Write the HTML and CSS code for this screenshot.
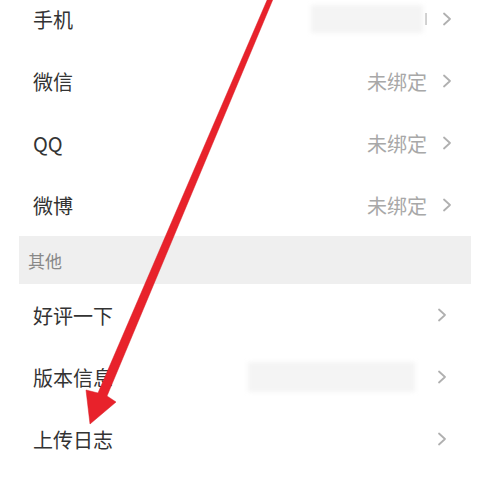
FILE: index.html
```html
<!DOCTYPE html>
<html lang="zh-CN">
<head>
<meta charset="utf-8">
<title>设置</title>
<link rel="stylesheet" href="styles.css">
</head>
<body>
<div class="page">
  <div class="list">
    <div class="group group-account">
      <div class="row">
        <span class="label">手机</span>
        <span class="value"><span class="masked masked-phone"></span><span class="tick"></span></span>
        <svg class="chev" viewBox="0 0 10 14" width="10" height="14"><polyline points="2,1.5 8,7 2,12.5"/></svg>
      </div>
      <div class="row">
        <span class="label">微信</span>
        <span class="value">未绑定</span>
        <svg class="chev" viewBox="0 0 10 14" width="10" height="14"><polyline points="2,1.5 8,7 2,12.5"/></svg>
      </div>
      <div class="row">
        <span class="label">QQ</span>
        <span class="value">未绑定</span>
        <svg class="chev" viewBox="0 0 10 14" width="10" height="14"><polyline points="2,1.5 8,7 2,12.5"/></svg>
      </div>
      <div class="row">
        <span class="label">微博</span>
        <span class="value">未绑定</span>
        <svg class="chev" viewBox="0 0 10 14" width="10" height="14"><polyline points="2,1.5 8,7 2,12.5"/></svg>
      </div>
    </div>
    <div class="section-title">其他</div>
    <div class="group group-other">
      <div class="row">
        <span class="label">好评一下</span>
        <span class="value"></span>
        <svg class="chev" viewBox="0 0 10 14" width="10" height="14"><polyline points="2,1.5 8,7 2,12.5"/></svg>
      </div>
      <div class="row">
        <span class="label">版本信息</span>
        <span class="value"><span class="masked masked-version"></span></span>
        <svg class="chev" viewBox="0 0 10 14" width="10" height="14"><polyline points="2,1.5 8,7 2,12.5"/></svg>
      </div>
      <div class="row">
        <span class="label">上传日志</span>
        <span class="value"></span>
        <svg class="chev" viewBox="0 0 10 14" width="10" height="14"><polyline points="2,1.5 8,7 2,12.5"/></svg>
      </div>
    </div>
  </div>

  <!-- annotation arrow pointing at the log upload entry -->
  <svg class="pointer" viewBox="0 0 487 481" width="487" height="481">
    <polygon points="268,-2 273.5,-2 107,396 116,402 90,424 86,390 98,393"/>
  </svg>
</div>
</body>
</html>
```

FILE: styles.css
```css
html, body {
  margin: 0;
  padding: 0;
  background: #ffffff;
}

.page {
  position: relative;
  width: 487px;
  height: 481px;
  overflow: hidden;
  font-family: "Noto Sans CJK SC", "Noto Sans", sans-serif;
}

.list {
  margin: -12px 16px 0 19px;
  display: flex;
  flex-direction: column;
}

.row {
  height: 62px;
  display: flex;
  align-items: center;
  padding: 0 19px 0 14px;
  background: #ffffff;
}

.group-other .row {
  padding-right: 24px;
}

.label {
  font-size: 20px;
  color: #333333;
  flex: 0 0 auto;
}

.value {
  flex: 1 1 auto;
  display: flex;
  justify-content: flex-end;
  align-items: center;
  font-size: 20px;
  color: #a8a8a8;
  margin-right: 15px;
}

.masked {
  display: block;
  background: #f4f4f4;
  filter: blur(2px);
}

.masked-phone {
  width: 112px;
  height: 28px;
}

.tick {
  display: block;
  width: 2px;
  height: 12px;
  margin-left: 2px;
  background: #cfcfcf;
}

.masked-version {
  width: 167px;
  height: 30px;
  margin-right: 7px;
}

.chev {
  flex: 0 0 auto;
  fill: none;
  stroke: #b0b0b0;
  stroke-width: 1.8;
  stroke-linecap: round;
  stroke-linejoin: round;
}

.section-title {
  height: 48px;
  display: flex;
  align-items: center;
  padding-left: 9px;
  background: #efefef;
  font-size: 17px;
  color: #888888;
}

.pointer {
  position: absolute;
  left: 0;
  top: 0;
  pointer-events: none;
}

.pointer polygon {
  fill: #e8222b;
  stroke: #d81c25;
  stroke-width: 0.5;
  stroke-linejoin: round;
}
```
